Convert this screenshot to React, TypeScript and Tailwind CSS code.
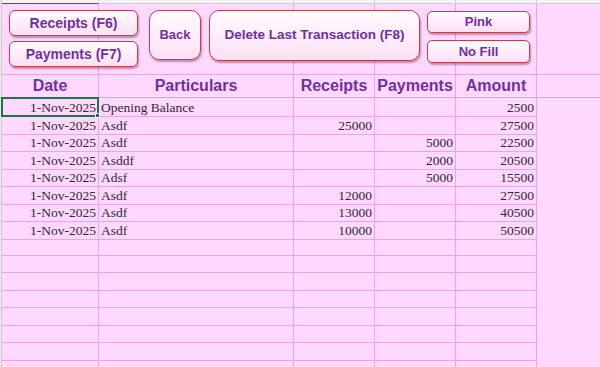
import React from "react";

const GRID = "grid grid-cols-[2px_97px_195px_81px_81px_81px_1fr]";
const LINE = "border-[#eba4ec]";
const SERIF = "font-['Liberation_Serif',serif] text-[13.5px] text-[#2e2a2e]";
const SANS = "font-['Liberation_Sans',Arial,sans-serif] font-bold text-[#7030a0]";

const data: string[][] = [
  ["1-Nov-2025", "Opening Balance", "", "", "2500"],
  ["1-Nov-2025", "Asdf", "25000", "", "27500"],
  ["1-Nov-2025", "Asdf", "", "5000", "22500"],
  ["1-Nov-2025", "Asddf", "", "2000", "20500"],
  ["1-Nov-2025", "Adsf", "", "5000", "15500"],
  ["1-Nov-2025", "Asdf", "12000", "", "27500"],
  ["1-Nov-2025", "Asdf", "13000", "", "40500"],
  ["1-Nov-2025", "Asdf", "10000", "", "50500"],
];
while (data.length < 16) data.push(["", "", "", "", ""]);

function Btn({ className, children }: { className: string; children: React.ReactNode }) {
  return (
    <div
      className={`flex items-center justify-center border-[1.5px] border-[#c43a52] bg-linear-to-b from-[#fffbff] to-[#fbe0f6] shadow-[1px_2px_2px_rgba(60,0,20,0.35)] ${SANS} ${className}`}
    >
      {children}
    </div>
  );
}

export default function App() {
  const cols = [0, 1, 2, 3, 4, 5];
  return (
    <div className="relative w-[600px] h-[367px] overflow-hidden bg-[#fed8fe]">
      {/* column header strip (cut off at the top edge) */}
      <div className={`${GRID} h-[4px]`}>
        <div className="bg-[#ececec] border-r border-[#c9c9c9] border-b" />
        {cols.map((i) => (
          <div
            key={i}
            className={`bg-[#f3f3f3] ${i === 5 ? "" : "border-r border-[#d5d5d5]"} ${i === 0 ? "border-b border-b-[#217346]" : "border-b border-b-[#cfcfcf]"}`}
          />
        ))}
      </div>

      {/* row 1: button row */}
      <div className={`${GRID} h-[71px]`}>
        <div className="bg-[#ececec] border-r border-[#c9c9c9]" />
        <div className={`border-r border-b ${LINE}`} />
        <div className={`border-r border-b ${LINE}`} />
        <div className={`border-r border-b ${LINE}`} />
        <div className={`border-r border-b ${LINE}`} />
        <div className={`border-r border-b ${LINE}`} />
        <div className={`border-b ${LINE}`} />
      </div>

      {/* header row */}
      <div className={`${GRID} h-[23px] ${SANS} text-[16px] leading-[22px]`}>
        <div className="bg-[#ececec] border-r border-[#c9c9c9] border-b border-b-[#bdb3bd]" />
        <div className={`border-r ${LINE} border-b border-b-[#bdb3bd] flex items-center justify-center`}>Date</div>
        <div className={`border-r ${LINE} border-b border-b-[#bdb3bd] flex items-center justify-center`}>Particulars</div>
        <div className={`border-r ${LINE} border-b border-b-[#bdb3bd] flex items-center justify-center`}>Receipts</div>
        <div className={`border-r ${LINE} border-b border-b-[#bdb3bd] flex items-center justify-center`}>Payments</div>
        <div className={`border-r ${LINE} border-b border-b-[#bdb3bd] flex items-center justify-center`}>Amount</div>
        <div className="border-b border-b-[#bdb3bd]" />
      </div>

      {/* data rows */}
      {data.map((r, i) => (
        <div key={i} className={`${GRID} ${i % 2 === 0 ? "h-[18px]" : "h-[17px]"} ${SERIF} leading-[17px]`}>
          <div className="bg-[#ececec] border-r border-[#c9c9c9]" />
          <div className={`relative border-r border-b ${LINE} flex items-center justify-end pr-[2px] pt-px whitespace-nowrap`}>
            {r[0]}
            {i === 0 && (
              <div className="absolute top-[-1px] left-[-1px] right-[-1px] bottom-[-1px] z-10 border-2 border-[#217346]">
                <div className="absolute right-[-3px] bottom-[-3px] w-[5px] h-[5px] bg-[#217346] border border-white" />
              </div>
            )}
          </div>
          <div className={`border-r border-b ${LINE} flex items-center pl-[2px] pt-px whitespace-nowrap`}>{r[1]}</div>
          <div className={`border-r border-b ${LINE} flex items-center justify-end pr-[2px] pt-px`}>{r[2]}</div>
          <div className={`border-r border-b ${LINE} flex items-center justify-end pr-[2px] pt-px`}>{r[3]}</div>
          <div className={`border-r border-b ${LINE} flex items-center justify-end pr-[2px] pt-px`}>{r[4]}</div>
          <div />
        </div>
      ))}

      {/* floating buttons over the sheet */}
      <div className="absolute top-[10px] left-[9px] flex items-start">
        <div className="flex flex-col gap-[5px] w-[129px]">
          <Btn className="h-[26px] rounded-[6px] text-[14px]">Receipts (F6)</Btn>
          <Btn className="h-[26px] rounded-[6px] text-[14px]">Payments (F7)</Btn>
        </div>
        <Btn className="ml-[11px] w-[52px] h-[50px] rounded-[10px] text-[13px]">Back</Btn>
        <Btn className="ml-[8px] w-[211px] h-[51px] rounded-[10px] text-[13.5px]">Delete Last Transaction (F8)</Btn>
        <div className="ml-[7px] flex flex-col gap-[7px] w-[103px] pt-px">
          <Btn className="h-[22px] rounded-[5px] text-[13px]">Pink</Btn>
          <Btn className="h-[23px] rounded-[5px] text-[13px]">No Fill</Btn>
        </div>
      </div>
    </div>
  );
}
